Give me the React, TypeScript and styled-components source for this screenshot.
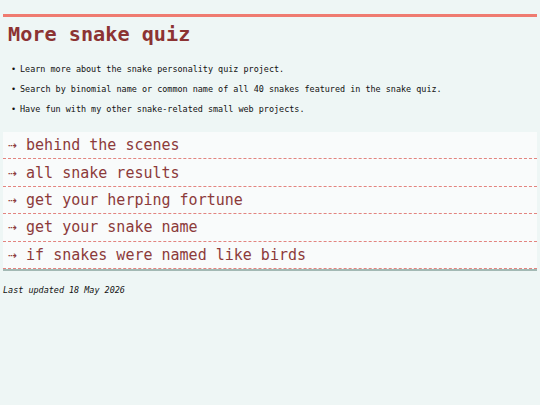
import React from 'react'
import styled, { createGlobalStyle } from 'styled-components'

const GlobalStyle = createGlobalStyle`
    body{
        margin: 0;
        background: #eef6f5;
        font-family: "DejaVu Sans Mono", "Liberation Mono", monospace;
        color: #111;
    }
`

const Page = styled.main`
    margin: 14px 3px 0;
    border-top: 3.5px solid #ef7b70;
`

const Title = styled.h1`
    margin: 5px 0 0;
    padding-left: 5px;
    font-size: 20.2px;
    line-height: 24px;
    font-weight: 700;
    color: #8c3333;
`

const Notes = styled.ul`
    margin: 13px 0 0;
    padding-left: 17px;
    list-style: none;
    font-size: 8.45px;
    line-height: 20px;
    > li::before{
        content: '•';
        display: inline-block;
        width: 9px;
        margin-left: -9px;
    }
`

const Links = styled.nav`
    margin-top: 13px;
    background: #f9fbfb;
    border-bottom: 2px solid #a3b9b4;
    display: flex;
    flex-direction: column;
`

const LinkRow = styled.a`
    display: flex;
    align-items: center;
    box-sizing: border-box;
    height: 27.4px;
    padding: 0 0 0 5px;
    border-bottom: 1px dashed #e3847f;
    font-size: 15px;
    color: #8c3a3a;
    text-decoration: none;
    white-space: pre;
`

const Updated = styled.p`
    margin: 14px 0 0;
    font-size: 8.45px;
    font-style: italic;
`

const notes = [
    'Learn more about the snake personality quiz project.',
    'Search by binomial name or common name of all 40 snakes featured in the snake quiz.',
    'Have fun with my other snake-related small web projects.',
]

const links = [
    'behind the scenes',
    'all snake results',
    'get your herping fortune',
    'get your snake name',
    'if snakes were named like birds',
]

function App() {
    return (
        <>
            <GlobalStyle />
            <Page>
                <Title>More snake quiz</Title>
                <Notes>
                    {notes.map(n => <li key={n}>{n}</li>)}
                </Notes>
                <Links>
                    {links.map(l => (
                        <LinkRow key={l} href="#">{'⇢ ' + l}</LinkRow>
                    ))}
                </Links>
                <Updated>Last updated 18 May 2026</Updated>
            </Page>
        </>
    )
}

export default App
